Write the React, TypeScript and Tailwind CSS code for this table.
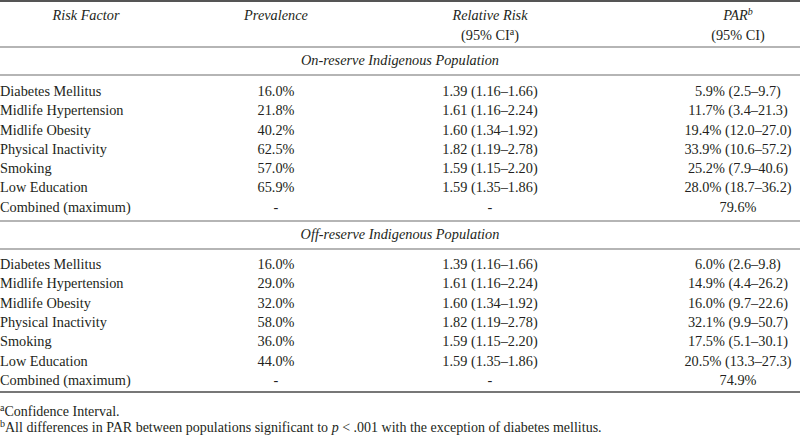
const onReserve = [
  ["Diabetes Mellitus", "16.0%", "1.39 (1.16–1.66)", "5.9% (2.5–9.7)"],
  ["Midlife Hypertension", "21.8%", "1.61 (1.16–2.24)", "11.7% (3.4–21.3)"],
  ["Midlife Obesity", "40.2%", "1.60 (1.34–1.92)", "19.4% (12.0–27.0)"],
  ["Physical Inactivity", "62.5%", "1.82 (1.19–2.78)", "33.9% (10.6–57.2)"],
  ["Smoking", "57.0%", "1.59 (1.15–2.20)", "25.2% (7.9–40.6)"],
  ["Low Education", "65.9%", "1.59 (1.35–1.86)", "28.0% (18.7–36.2)"],
  ["Combined (maximum)", "-", "-", "79.6%"],
];

const offReserve = [
  ["Diabetes Mellitus", "16.0%", "1.39 (1.16–1.66)", "6.0% (2.6–9.8)"],
  ["Midlife Hypertension", "29.0%", "1.61 (1.16–2.24)", "14.9% (4.4–26.2)"],
  ["Midlife Obesity", "32.0%", "1.60 (1.34–1.92)", "16.0% (9.7–22.6)"],
  ["Physical Inactivity", "58.0%", "1.82 (1.19–2.78)", "32.1% (9.9–50.7)"],
  ["Smoking", "36.0%", "1.59 (1.15–2.20)", "17.5% (5.1–30.1)"],
  ["Low Education", "44.0%", "1.59 (1.35–1.86)", "20.5% (13.3–27.3)"],
  ["Combined (maximum)", "-", "-", "74.9%"],
];

const cols = "grid grid-cols-[172px_208px_220px_200px]";

function Sup({ children }: { children: React.ReactNode }) {
  return <span className="relative -top-[5px] text-[10px] leading-none">{children}</span>;
}

function Rows({ rows }: { rows: string[][] }) {
  return (
    <>
      {rows.map((r, i) => (
        <div key={i} className={`${cols} leading-[19.3px]`}>
          <div>{r[0]}</div>
          <div className="text-center">{r[1]}</div>
          <div className="text-center">{r[2]}</div>
          <div className="text-center pl-[76px]">{r[3]}</div>
        </div>
      ))}
    </>
  );
}

function Section({ title }: { title: string }) {
  return (
    <div className="h-[28px] flex items-center justify-center italic border-b-2 border-[#b5b5b5]">
      {title}
    </div>
  );
}

export default function App() {
  return (
    <div className="w-[800px] h-[437px] bg-white text-[#231f20] text-[14.3px] font-['Liberation_Serif',serif] overflow-hidden">
      {/* header */}
      <div className={`${cols} border-t-2 border-[#555] border-b-2 border-b-[#b5b5b5] h-[48px] pt-[3px] leading-[20px]`}>
        <div className="text-center italic">Risk Factor</div>
        <div className="text-center italic">Prevalence</div>
        <div className="text-center">
          <div className="italic">Relative Risk</div>
          <div>
            (95% CI<Sup>a</Sup>)
          </div>
        </div>
        <div className="text-center pl-[76px]">
          <div className="italic">
            PAR<Sup>b</Sup>
          </div>
          <div>(95% CI)</div>
        </div>
      </div>

      <Section title="On-reserve Indigenous Population" />
      <div className="border-b-2 border-[#b5b5b5] pt-[6px] pb-[3px]">
        <Rows rows={onReserve} />
      </div>

      <Section title="Off-reserve Indigenous Population" />
      <div className="border-b-2 border-[#777] pt-[5px] pb-[1px]">
        <Rows rows={offReserve} />
      </div>

      {/* footnotes */}
      <div className="pt-[11px] leading-[16px] text-[14px]">
        <div>
          <Sup>a</Sup>Confidence Interval.
        </div>
        <div>
          <Sup>b</Sup>All differences in PAR between populations significant to <span className="italic">p</span> &lt; .001 with the exception of diabetes mellitus.
        </div>
      </div>
    </div>
  );
}
